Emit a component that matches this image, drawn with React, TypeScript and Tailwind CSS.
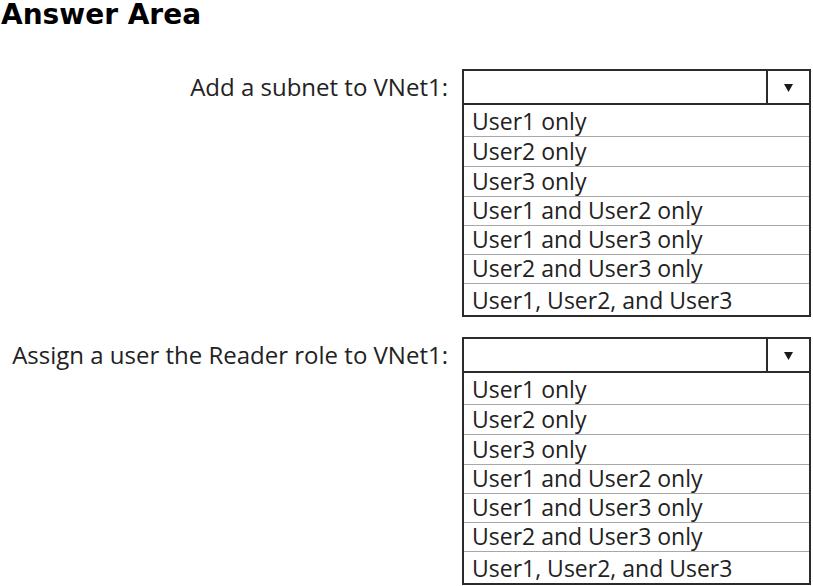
import { Fragment } from "react";

const options = [
  "User1 only",
  "User2 only",
  "User3 only",
  "User1 and User2 only",
  "User1 and User3 only",
  "User2 and User3 only",
  "User1, User2, and User3",
];

const rowHeights = ["h-[32px]", "h-[30px]", "h-[30px]", "h-[29px]", "h-[29px]", "h-[29px]", "h-[31px]"];

const questions = [
  "Add a subnet to VNet1:",
  "Assign a user the Reader role to VNet1:",
];

const Dropdown = () => (
  <div className="w-[349px] border-2 border-[#2b2b2b] bg-white">
    {/* Select header */}
    <div className="flex h-[34px] border-b-2 border-[#2b2b2b]">
      <div className="flex-1" />
      <div className="flex w-[43px] items-center justify-center border-l-2 border-[#2b2b2b]">
        <svg width="9" height="9" viewBox="0 0 9 9">
          <polygon points="0,1 9,1 4.5,9" fill="#1a1a1a" />
        </svg>
      </div>
    </div>

    {/* Option list */}
    {options.map((option, index) => (
      <div
        key={index}
        className={`flex items-end pl-[8px] text-[23px] leading-none text-[#222] ${rowHeights[index]} ${
          index < options.length - 1 ? "border-b border-[#a8a8a8]" : ""
        }`}
      >
        <span className="pb-[3px]">{option}</span>
      </div>
    ))}
  </div>
);

export default function App() {
  return (
    <div
      className="h-[586px] w-[813px] overflow-hidden bg-white text-[#222]"
      style={{ fontFamily: '"Open Sans", "Noto Sans", sans-serif' }}
    >
      <h1
        className="pl-[1px] pt-[1px] text-[28px] font-bold leading-[28px] text-black"
        style={{ fontFamily: '"DejaVu Sans", sans-serif' }}
      >
        Answer Area
      </h1>

      <div className="mt-[40px] flex flex-col gap-[20px]">
        {questions.map((question, index) => (
          <Fragment key={index}>
            <div className="flex items-start">
              <div className="flex h-[36px] w-[448px] items-center justify-end text-[24px] leading-none">
                {question}
              </div>
              <div className="ml-[14px]">
                <Dropdown />
              </div>
            </div>
          </Fragment>
        ))}
      </div>
    </div>
  );
}
